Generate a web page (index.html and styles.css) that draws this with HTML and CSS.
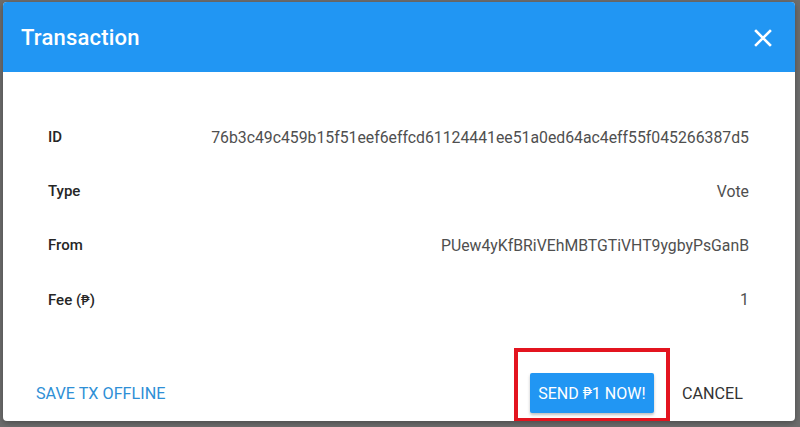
FILE: index.html
```html
<!DOCTYPE html>
<html>
<head>
<meta charset="utf-8">
<link rel="stylesheet" href="styles.css">
</head>
<body>
<div class="dialog">
  <header class="head">
    <h1 class="title">Transaction</h1>
    <button class="close" aria-label="Close">
      <svg width="18" height="18" viewBox="0 0 18 18"><path d="M2 2 L16 16 M16 2 L2 16" stroke="#fff" stroke-width="2.6" stroke-linecap="square"/></svg>
    </button>
  </header>
  <div class="body">
    <div class="row"><span class="label">ID</span><span class="value">76b3c49c459b15f51eef6effcd61124441ee51a0ed64ac4eff55f045266387d5</span></div>
    <div class="row"><span class="label">Type</span><span class="value">Vote</span></div>
    <div class="row"><span class="label">From</span><span class="value">PUew4yKfBRiVEhMBTGTiVHT9ygbyPsGanB</span></div>
    <div class="row"><span class="label">Fee (<span class="peso">₱</span>)</span><span class="value">1</span></div>
  </div>
  <footer class="foot">
    <button class="flat primary">SAVE TX OFFLINE</button>
    <span class="spacer"></span>
    <span class="highlight"><button class="raised">SEND <span class="peso">₱</span>1 NOW!</button></span>
    <button class="flat cancel">CANCEL</button>
  </footer>
</div>
</body>
</html>
```

FILE: styles.css
```css
html, body {
  margin: 0;
  padding: 0;
}
body {
  background: #6d6d6d;
  width: 800px;
  height: 427px;
  padding: 2px 5px 6px 3px;
  box-sizing: border-box;
  font-family: Roboto, "Noto Sans", sans-serif;
  overflow: hidden;
}
.dialog {
  width: 792px;
  height: 419px;
  background: #fff;
  border-radius: 4px;
  overflow: hidden;
  display: flex;
  flex-direction: column;
  box-shadow: 0 2px 6px rgba(0,0,0,0.3);
}
.head {
  height: 70px;
  background: #2196f3;
  display: flex;
  align-items: center;
  padding: 0 20px 0 18px;
  flex: none;
}
.title {
  margin: 0;
  font-size: 22px;
  font-weight: 500;
  color: #fff;
  flex: 1;
  letter-spacing: 0.2px;
}
.close {
  background: none;
  border: none;
  padding: 0;
  width: 24px;
  height: 24px;
  display: flex;
  align-items: center;
  justify-content: center;
  margin-top: 2px;
}
.body {
  padding: 38px 46px 0 45px;
  flex: none;
}
.row {
  height: 54px;
  display: flex;
  align-items: center;
  justify-content: space-between;
}
.label {
  font-size: 15px;
  font-weight: 500;
  color: #262626;
}
.value {
  font-size: 15.8px;
  color: #4f4f4f;
}
.peso {
  font-family: "Noto Sans", "Liberation Sans", sans-serif;
}
.foot {
  flex: 1;
  display: flex;
  align-items: flex-end;
  padding: 22px 44px 0 25px;
}
.spacer { flex: 1; }
button {
  font-family: Roboto, "Noto Sans", sans-serif;
  cursor: pointer;
}
.flat {
  background: none;
  border: none;
  height: 40px;
  padding: 0 8px;
  margin-bottom: 9px;
  font-size: 16.2px;
  font-weight: 400;
}
.primary { color: #2e8fd6; }
.cancel { color: #333; margin-left: 4px; }
.highlight {
  display: flex;
  border: 4px solid #e3141f;
  padding: 21px 12px 5px 12px;
}
.raised {
  width: 124px;
  height: 40px;
  background: #2196f3;
  color: #fff;
  border: none;
  border-radius: 2px;
  font-size: 16px;
  font-weight: 400;
  padding: 0;
  box-shadow: 0 2px 3px rgba(0,0,0,0.25);
}
```
